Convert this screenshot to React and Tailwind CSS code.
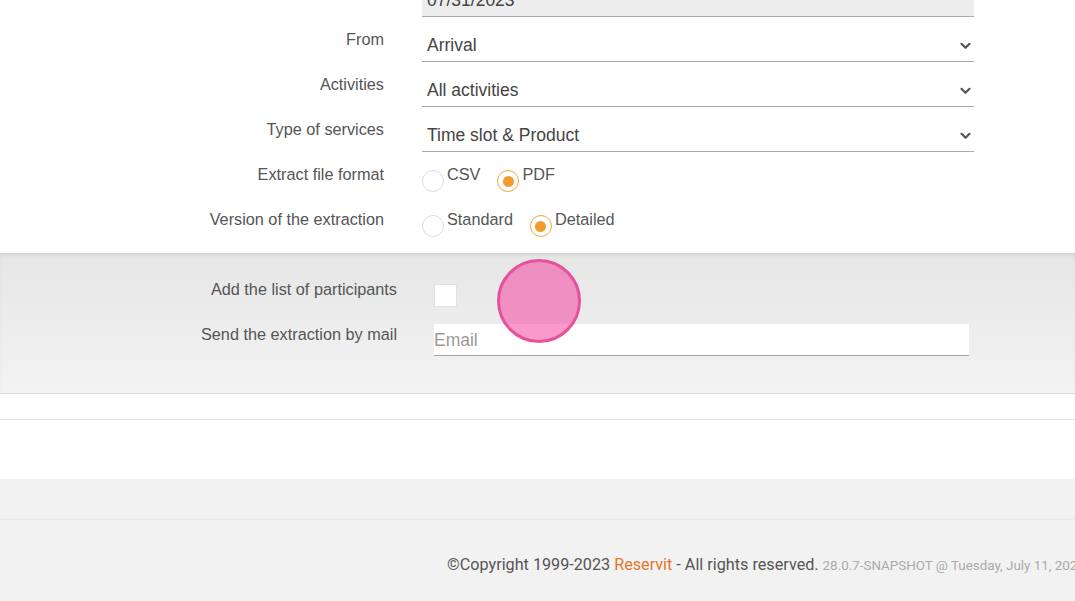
import React from 'react';

const labelFont = { fontFamily: '"Liberation Sans", Arial, sans-serif' };

function Chevron() {
  return (
    <svg width="11" height="8" viewBox="0 0 11 8" className="text-[#555]">
      <path d="M1.5 1.8 L5.5 5.8 L9.5 1.8" fill="none" stroke="currentColor" strokeWidth="2.2" strokeLinecap="round" strokeLinejoin="round" />
    </svg>
  );
}

function SelectRow({ label, value }) {
  return (
    <div className="flex mb-[10px]">
      <div className="w-[384px] pt-[2px] text-right text-[16.25px] leading-[20px] text-[#555]">{label}</div>
      <div className="ml-[38px] w-[552px] h-[35px] flex items-center justify-between border-b border-[#a9a9a9] pl-[5px] pr-[3px] pt-[3px] text-[17.5px] text-[#444]">
        <span>{value}</span>
        <Chevron />
      </div>
    </div>
  );
}

function Radio({ label, checked }) {
  return (
    <label className="flex items-start mr-[17px]">
      <span
        className={
          checked
            ? 'mt-[8px] w-[22px] h-[22px] rounded-full border border-[#f0a545] bg-white flex items-center justify-center'
            : 'mt-[8px] w-[22px] h-[22px] rounded-full border border-[#dcdcdc] bg-white'
        }
      >
        {checked && <span className="w-[11px] h-[11px] rounded-full bg-[#f39a2e]" />}
      </span>
      <span className="ml-[3px] pt-[2px] text-[16.25px] leading-[20px] text-[#555]">{label}</span>
    </label>
  );
}

function RadioRow({ label, options, selected }) {
  return (
    <div className="flex mb-[10px] h-[35px]">
      <div className="w-[384px] pt-[2px] text-right text-[16.25px] leading-[20px] text-[#555]">{label}</div>
      <div className="ml-[38px] flex">
        {options.map((o) => (
          <Radio key={o} label={o} checked={o === selected} />
        ))}
      </div>
    </div>
  );
}

export default function App() {
  return (
    <div className="h-[601px] w-full overflow-hidden bg-[#f2f2f2]" style={labelFont}>
      {/* Main filter form */}
      <section className="bg-white pb-[1px]">
        <div className="-mt-[18px]">
          <div className="flex mb-[10px]">
            <div className="w-[384px] pt-[2px] text-right text-[16.25px] leading-[20px] text-[#555]">Until the</div>
            <div className="ml-[38px] w-[552px] h-[35px] flex items-center border-b border-[#a9a9a9] bg-[#ededed] pl-[5px] pt-[3px] text-[17.5px] text-[#444]">
              07/31/2023
            </div>
          </div>
          <SelectRow label="From" value="Arrival" />
          <SelectRow label="Activities" value="All activities" />
          <SelectRow label="Type of services" value="Time slot & Product" />
          <RadioRow label="Extract file format" options={['CSV', 'PDF']} selected="PDF" />
          <RadioRow label="Version of the extraction" options={['Standard', 'Detailed']} selected="Detailed" />
        </div>
      </section>

      {/* Additional options */}
      <section className="relative h-[141px] border-b border-[#dcdcdc] bg-gradient-to-b from-[#e6e6e6] to-[#f3f3f3] shadow-[inset_0_3px_4px_-2px_rgba(0,0,0,0.12)] pt-[31px]">
        <div className="flex items-start h-[40px]">
          <div className="w-[397px] -mt-[5px] text-right text-[16.25px] leading-[20px] text-[#555]">Add the list of participants</div>
          <div className="ml-[37px] w-[23px] h-[23px] bg-white border border-[#e2e2e2]" />
        </div>
        <div className="flex items-start">
          <div className="w-[397px] text-right text-[16.25px] leading-[20px] text-[#555]">Send the extraction by mail</div>
          <div className="ml-[37px] w-[535px] h-[32px] bg-white border-b border-[#a5a5a5] flex items-center pt-[1px] text-[17.5px] text-[#9a9a9a]">
            Email
          </div>
        </div>
        <div className="absolute left-[497px] top-[6px] w-[84px] h-[84px] rounded-full bg-pink-500/50 border-[3px] border-[#e5519b]" />
      </section>

      <div className="h-[26px] bg-white border-b border-[#e4e4e4]" />
      <div className="h-[59px] bg-white" />

      {/* Footer */}
      <div className="h-[41px] border-b border-[#eaeaea]" />
      <footer className="pt-[33px] pl-[447px] whitespace-nowrap" style={{ fontFamily: 'Roboto, sans-serif' }}>
        <span className="text-[16.2px] text-[#555]">
          ©Copyright 1999-2023 <span className="text-[#e2772e]">Reservit</span> - All rights reserved.
        </span>{' '}
        <span className="text-[13.4px] text-[#aaa]">28.0.7-SNAPSHOT @ Tuesday, July 11, 2023</span>
      </footer>
    </div>
  );
}
